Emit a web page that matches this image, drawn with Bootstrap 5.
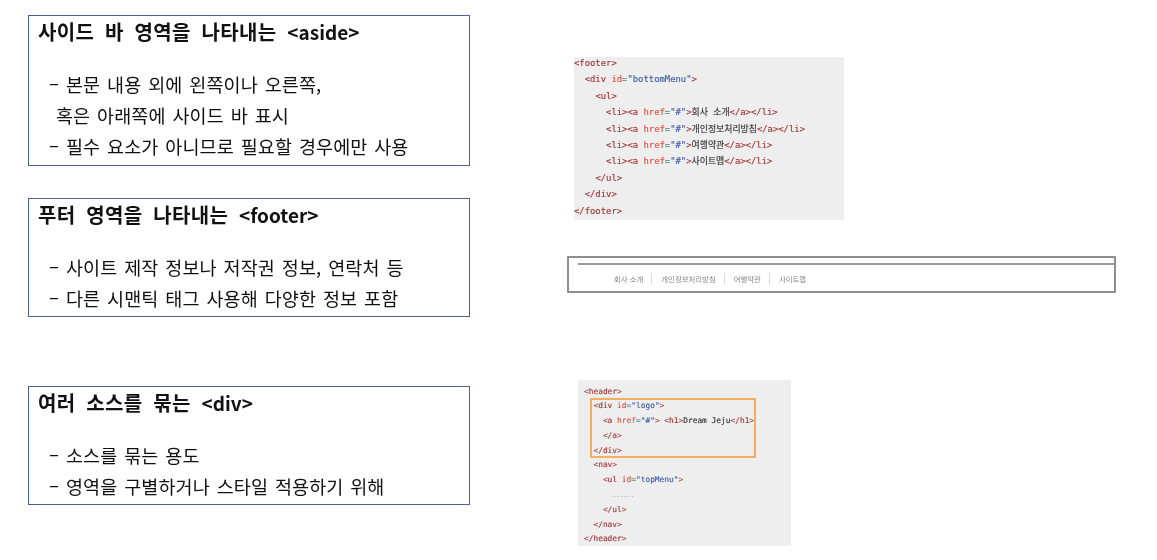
<!doctype html>
<html lang="ko"><head><meta charset="utf-8">
<link href="https://cdn.jsdelivr.net/npm/bootstrap@5.3.0/dist/css/bootstrap.min.css" rel="stylesheet">
<style>
html,body{height:560px;overflow:hidden;background:#fff}
body{font-family:"Noto Sans CJK KR","Liberation Sans",sans-serif;color:#111}
.slide{width:1157px;height:560px}
.left-col{width:442px;margin-left:28px;padding-top:15px}
.info-box{width:442px;border:1px solid #4a6396;padding:0 9px}
.info-box>*{filter:blur(.3px)}
.box-a{height:151px}
.box-b{height:119px;margin-top:32px}
.box-c{height:119px;margin-top:69px}
.box-title{font-size:20px;font-weight:700;line-height:32px;margin:0 0 21px;white-space:nowrap;letter-spacing:.3px;word-spacing:5px}
.tag-name{font-size:19px;letter-spacing:0}
.box-line{font-size:18.5px;line-height:31px;margin:0;padding-left:11px;white-space:nowrap;letter-spacing:.1px;word-spacing:1.6px}
.box-line.cont{padding-left:18px}
.right-col{width:560px;margin-left:97px}
.code-shot{background:#eeeeef;font-family:"DejaVu Sans Mono","Noto Sans CJK KR",monospace;white-space:pre;filter:blur(.4px);color:#333;-webkit-text-stroke:.15px currentColor}
.shot-one{display:flow-root;width:270px;height:163px;margin:57px 0 0 7px;font-size:8.9px;line-height:16.4px}
.shot-one>div{margin-top:-2px}
.shot-two{width:213px;height:166px;margin:87px 0 0 11px;padding:4.5px 0 0 6px;font-size:7.85px;line-height:14.8px;position:relative}
.tg{color:#a33a36}.at{color:#e4543e}.vl{color:#3f5ea8}.eq{color:#5a9aa0}
.dots{color:#aaa;font-size:6px}
.hl-frame{position:absolute;left:12px;top:18px;width:166px;height:60px;border:2px solid #f4ae5c}
.menu-shot{width:549px;height:37px;margin-top:36px;border:2px solid #8e8e8e;border-radius:1px;padding:5px 0 0 0;filter:blur(.5px)}
.menu-rule{height:2px;background:#9b9b9b;margin-left:9px}
.menu-items{padding:8px 0 0 45px;gap:8px;font-size:7.4px;color:#888;line-height:12px}
.menu-items span+span{border-left:1px solid #ddd;padding-left:9px}
</style></head>
<body class="m-0">
<div class="slide d-flex">
 <div class="left-col flex-shrink-0">
  <section class="info-box box-a">
   <h2 class="box-title">사이드 바 영역을 나타내는 <span class="tag-name">&lt;aside&gt;</span></h2>
   <p class="box-line">– 본문 내용 외에 왼쪽이나 오른쪽,</p>
   <p class="box-line cont">혹은 아래쪽에 사이드 바 표시</p>
   <p class="box-line">– 필수 요소가 아니므로 필요할 경우에만 사용</p>
  </section>
  <section class="info-box box-b">
   <h2 class="box-title">푸터 영역을 나타내는 <span class="tag-name">&lt;footer&gt;</span></h2>
   <p class="box-line">– 사이트 제작 정보나 저작권 정보, 연락처 등</p>
   <p class="box-line">– 다른 시맨틱 태그 사용해 다양한 정보 포함</p>
  </section>
  <section class="info-box box-c">
   <h2 class="box-title">여러 소스를 묶는 <span class="tag-name">&lt;div&gt;</span></h2>
   <p class="box-line">– 소스를 묶는 용도</p>
   <p class="box-line">– 영역을 구별하거나 스타일 적용하기 위해</p>
  </section>
 </div>
 <div class="right-col flex-shrink-0">
  <div class="code-shot shot-one"><div><span class="tg">&lt;footer&gt;</span>
  <span class="tg">&lt;div</span> <span class="at">id</span><span class="eq">=</span><span class="vl">"bottomMenu"</span><span class="tg">&gt;</span>
    <span class="tg">&lt;ul&gt;</span>
      <span class="tg">&lt;li&gt;&lt;a</span> <span class="at">href</span><span class="eq">=</span><span class="vl">"#"</span><span class="tg">&gt;</span>회사 소개<span class="tg">&lt;/a&gt;&lt;/li&gt;</span>
      <span class="tg">&lt;li&gt;&lt;a</span> <span class="at">href</span><span class="eq">=</span><span class="vl">"#"</span><span class="tg">&gt;</span>개인정보처리방침<span class="tg">&lt;/a&gt;&lt;/li&gt;</span>
      <span class="tg">&lt;li&gt;&lt;a</span> <span class="at">href</span><span class="eq">=</span><span class="vl">"#"</span><span class="tg">&gt;</span>여행약관<span class="tg">&lt;/a&gt;&lt;/li&gt;</span>
      <span class="tg">&lt;li&gt;&lt;a</span> <span class="at">href</span><span class="eq">=</span><span class="vl">"#"</span><span class="tg">&gt;</span>사이트맵<span class="tg">&lt;/a&gt;&lt;/li&gt;</span>
    <span class="tg">&lt;/ul&gt;</span>
  <span class="tg">&lt;/div&gt;</span>
<span class="tg">&lt;/footer&gt;</span></div></div>
  <div class="menu-shot">
   <div class="menu-rule"></div>
   <div class="menu-items d-flex"><span>회사 소개</span><span>개인정보처리방침</span><span>여행약관</span><span>사이트맵</span></div>
  </div>
  <div class="code-shot shot-two"><span class="tg">&lt;header&gt;</span>
  <span class="tg">&lt;div</span> <span class="at">id</span><span class="eq">=</span><span class="vl">"logo"</span><span class="tg">&gt;</span>
    <span class="tg">&lt;a</span> <span class="at">href</span><span class="eq">=</span><span class="vl">"#"</span><span class="tg">&gt;</span> <span class="tg">&lt;h1&gt;</span>Dream Jeju<span class="tg">&lt;/h1&gt;</span>
    <span class="tg">&lt;/a&gt;</span>
  <span class="tg">&lt;/div&gt;</span>
  <span class="tg">&lt;nav&gt;</span>
    <span class="tg">&lt;ul</span> <span class="at">id</span><span class="eq">=</span><span class="vl">"topMenu"</span><span class="tg">&gt;</span>
      <span class="dots">......</span>
    <span class="tg">&lt;/ul&gt;</span>
  <span class="tg">&lt;/nav&gt;</span>
<span class="tg">&lt;/header&gt;</span><div class="hl-frame"></div></div>
 </div>
</div>
<script src="https://cdn.jsdelivr.net/npm/bootstrap@5.3.0/dist/js/bootstrap.bundle.min.js"></script>
</body></html>
